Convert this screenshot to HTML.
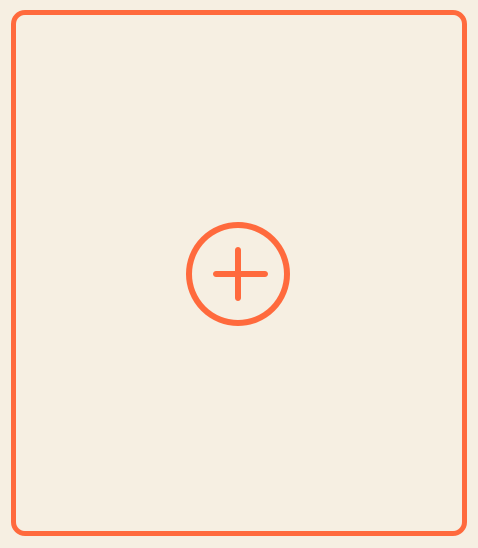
<!DOCTYPE html><html><head><style>html,body{margin:0;width:478px;height:548px;background:#f6efe2;overflow:hidden}
.b{position:absolute;left:11px;top:10px;width:446px;height:516px;border:5px solid #ff6a3d;border-radius:14px}</style></head><body>
<div class="b"></div>
<svg style="position:absolute;left:0;top:0" width="478" height="548"><circle cx="238" cy="274" r="49" fill="none" stroke="#ff6a3d" stroke-width="6"/><path d="M216 274H265M238 250V298" stroke="#ff6a3d" stroke-width="6" stroke-linecap="round"/></svg>
</body></html>
